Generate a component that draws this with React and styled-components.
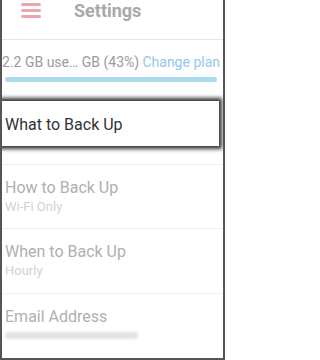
import styled, { createGlobalStyle } from 'styled-components';

const GlobalStyle = createGlobalStyle`
  html, body {
    margin: 0;
    padding: 0;
    background: #fff;
  }
  body {
    font-family: Roboto, "Noto Sans", "Liberation Sans", sans-serif;
  }
`;

const Frame = styled.div`
  width: 225px;
  height: 360px;
  box-sizing: border-box;
  border: 2px solid #555;
  border-top: none;
  overflow: hidden;
  display: flex;
  flex-direction: column;
  background: #fff;
`;

const Header = styled.div`
  height: 40px;
  display: flex;
  align-items: flex-start;
  border-bottom: 1px solid #e6e6e6;
  padding-top: 1px;
  box-sizing: border-box;
`;

const Burger = styled.div`
  width: 20px;
  margin: 2px 0 0 19px;
  display: flex;
  flex-direction: column;
  gap: 3px;
`;

const Bar = styled.span`
  display: block;
  height: 3px;
  border-radius: 2px;
  background: #eda5aa;
`;

const Title = styled.h1`
  margin: 0 0 0 33px;
  font-size: 18px;
  line-height: 19px;
  font-weight: 700;
  color: #a9a9a9;
`;

const Storage = styled.div`
  padding: 14px 2px 0 0;
  display: flex;
  flex-direction: column;
`;

const StorageRow = styled.div`
  display: flex;
  justify-content: space-between;
  align-items: baseline;
  font-size: 14px;
  line-height: 17px;
  white-space: nowrap;
`;

const Used = styled.span`
  color: #9b9b9b;
`;

const PlanLink = styled.span`
  color: #97c7e7;
  margin-right: 1px;
`;

const Progress = styled.div`
  height: 5px;
  margin: 6px 4px 0 3px;
  border-radius: 3px;
  background: #abdcee;
`;

const Section = styled.div`
  padding: ${p => p.$pad || '13px 3px 0'};
  height: ${p => p.$h}px;
  box-sizing: border-box;
  border-bottom: ${p => (p.$last ? 'none' : '1px solid #f0f0f0')};
`;

const Focus = styled.div`
  height: 45px;
  margin-right: 4px;
  background: #fff;
  box-shadow: 0 0 4px 3px rgba(30, 30, 30, 0.9);
  display: flex;
  align-items: center;
  padding: 2px 0 0 3px;
  box-sizing: border-box;
  font-size: 16px;
  color: #333;
`;

const ItemTitle = styled.div`
  font-size: 16px;
  line-height: 19px;
  color: #b0b0b0;
`;

const ItemSub = styled.div`
  font-size: 13px;
  line-height: 17px;
  margin-top: 1px;
  color: #d2d2d2;
`;

const Blurred = styled.div`
  width: 133px;
  height: 7px;
  margin-top: 6px;
  border-radius: 3px;
  background: #e2e2e2;
  filter: blur(1.5px);
`;

const items = [
  { title: 'How to Back Up', sub: 'Wi-Fi Only' },
  { title: 'When to Back Up', sub: 'Hourly' },
];

export default function App() {
  return (
    <>
      <GlobalStyle />
      <Frame>
        <Header>
          <Burger>
            <Bar />
            <Bar />
            <Bar />
          </Burger>
          <Title>Settings</Title>
        </Header>
        <Storage>
          <StorageRow>
            <Used>2.2 GB use… GB (43%)</Used>
            <PlanLink>Change plan</PlanLink>
          </StorageRow>
          <Progress />
        </Storage>
        <Section $pad="19px 0 0" $h={84}>
          <Focus>What to Back Up</Focus>
        </Section>
        {items.map(it => (
          <Section key={it.title} $h={65}>
            <ItemTitle>{it.title}</ItemTitle>
            <ItemSub>{it.sub}</ItemSub>
          </Section>
        ))}
        <Section $h={65} $last>
          <ItemTitle>Email Address</ItemTitle>
          <Blurred />
        </Section>
      </Frame>
    </>
  );
}
